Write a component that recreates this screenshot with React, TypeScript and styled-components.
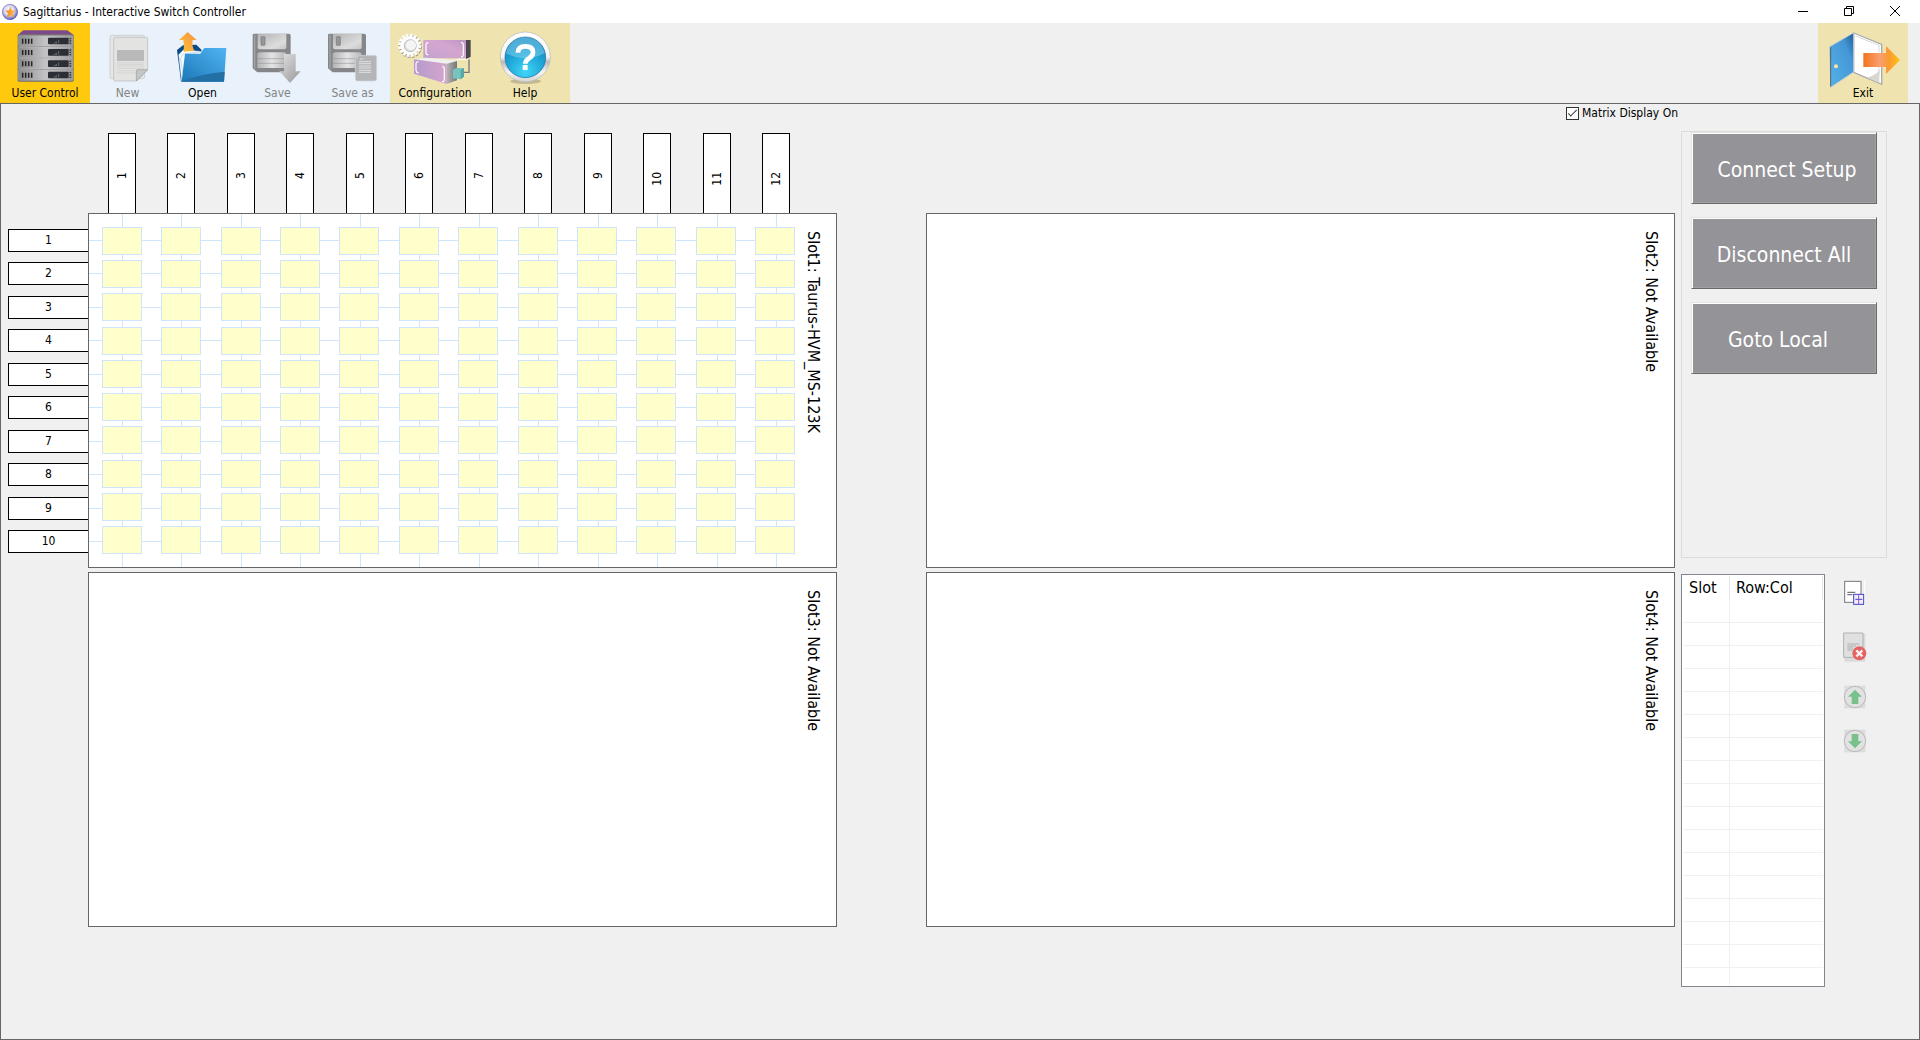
import React, { useState } from "react";
import styled, { createGlobalStyle, css } from "styled-components";

const GlobalStyle = createGlobalStyle`
  *, *::before, *::after { box-sizing: border-box; }
  body {
    margin: 0;
    background: #f0f0f0;
    color: #000;
    font-family: Tahoma, "DejaVu Sans Condensed", "Noto Sans", sans-serif;
    font-size: 12px;
    line-height: 16px;
  }
  button, input { font: inherit; color: inherit; }
`;

/* ---------- window frame ---------- */

const Window = styled.div`
  display: flex;
  flex-direction: column;
  min-height: 100vh;
`;

const TitleBar = styled.header`
  display: flex;
  align-items: center;
  gap: 5px;
  height: 23px;
  padding: 0 2px;
  background: #fff;
`;

const Title = styled.h1`
  flex: 1;
  margin: 0;
  font-size: 12px;
  font-weight: 400;
`;

const WindowButtons = styled.div`
  display: flex;
`;

const WindowButton = styled.button`
  display: grid;
  place-items: center;
  width: 46px;
  height: 23px;
  padding: 0 0 2px;
  border: 0;
  background: none;
`;

/* ---------- toolbar ---------- */

const Toolbar = styled.nav`
  display: flex;
  padding-right: 12px;
`;

const ToolGroup = styled.div<{ $tone: string; $end?: boolean }>`
  display: flex;
  background: ${(p) => p.$tone};
  ${(p) => p.$end && css`margin-left: auto;`}
`;

const ToolButton = styled.button<{ $narrow?: boolean }>`
  display: flex;
  flex-direction: column;
  align-items: center;
  gap: 1px;
  width: ${(p) => (p.$narrow ? 75 : 90)}px;
  padding: 7px 0 2px;
  border: 0;
  background: none;
  white-space: nowrap;
  line-height: 16px;

  &:disabled { color: #838383; }
  svg { display: block; overflow: visible; }
`;

/* ---------- work area ---------- */

const Main = styled.main`
  flex: 1;
  display: flex;
  gap: 6px;
  padding: 0 32px 0 7px;
  border: 1px solid #666;
`;

const Matrices = styled.section`
  flex: 1;
  min-width: 0;
`;

const DisplayToggle = styled.label`
  display: flex;
  justify-content: flex-end;
  align-items: center;
  gap: 3px;
  height: 18px;
  margin: 0 -3px 11px 0;
`;

const CheckBox = styled.input`
  appearance: none;
  width: 13px;
  height: 13px;
  margin: 0;
  border: 1px solid #333;
  background: #fff;
  display: grid;
  place-items: center;

  &:checked::after {
    content: "";
    width: 9px;
    height: 4px;
    margin-bottom: 3px;
    border: solid #333;
    border-width: 0 0 1px 1px;
    transform: rotate(-45deg);
  }
`;

const SlotGrid = styled.div`
  display: grid;
  grid-template-columns: 80px 1fr 89px 1fr;
  grid-template-rows: 80px 355px 355px;
`;

const ColumnPins = styled.div`
  grid-area: 1 / 2;
  display: flex;
  justify-content: space-between;
  padding: 0 47px 0 20px;
`;

const ColumnPin = styled.div`
  display: flex;
  flex-direction: column;
  align-items: center;
  width: 28px;
  padding-top: 38px;
  border: 1px solid #000;
  border-bottom: 0;
  background: #fff;

  span {
    writing-mode: vertical-rl;
    transform: rotate(180deg);
  }
`;

const RowPins = styled.div`
  grid-area: 2 / 1;
  display: flex;
  flex-direction: column;
  justify-content: space-between;
  padding: 16px 0 15px;
`;

const RowPin = styled.div`
  height: 23px;
  border: 1px solid #000;
  border-right: 0;
  background: #fff;
  line-height: 20px;
  text-align: center;
`;

const Slot = styled.article<{ $row: number; $col: number; $joined?: boolean }>`
  grid-area: ${(p) => p.$row} / ${(p) => p.$col};
  display: flex;
  border: 1px solid #666;
  background: #fff;
  margin-top: ${(p) => (p.$joined ? 4 : 0)}px;
  margin-bottom: ${(p) => (p.$joined ? -4 : 0)}px;
`;

const SlotName = styled.h2`
  width: 41px;
  margin: 0 0 0 auto;
  padding: 17px 9px 0 0;
  writing-mode: vertical-rl;
  font-size: 16px;
  font-weight: 400;
  line-height: 28px;
`;

const Board = styled.div`
  flex: 1;
  display: grid;

  > * { grid-area: 1 / 1; }
`;

const ColumnWires = styled.div`
  display: flex;
  justify-content: space-between;
  padding: 0 18px 0 33px;

  i { width: 1px; background: #cfe5fb; }
`;

const RowWires = styled.div`
  display: flex;
  flex-direction: column;
  justify-content: space-between;
  padding: 26px 20px 25px 0;

  i { height: 1px; background: #cfe5fb; }
`;

const Relays = styled.div`
  z-index: 1;
  display: flex;
  flex-direction: column;
  justify-content: space-between;
  padding: 13px 0 13px 13px;
`;

const RelayRow = styled.div`
  display: flex;
  justify-content: space-between;
`;

const Relay = styled.button`
  width: 40px;
  height: 28px;
  padding: 0;
  border: 1px solid #cfe5fb;
  background: #ffffcc;
`;

/* ---------- side panel ---------- */

const Side = styled.aside`
  flex: 0 0 206px;
  padding-top: 27px;
`;

const Commands = styled.div`
  display: flex;
  flex-direction: column;
  gap: 13px;
  min-height: 427px;
  padding: 0 9px;
  border: 1px solid #dcdcdc;
`;

const Command = styled.button`
  height: 72px;
  padding: 3px 0 0;
  border: 1px solid;
  border-color: #e3e3e3 #696969 #696969 #e3e3e3;
  box-shadow: inset 1px 1px #fff, inset -1px -1px #a0a0a0;
  background: #949398;
  color: #fff;
  font-size: 21px;
  white-space: pre;
`;

const Sequence = styled.div`
  display: flex;
  gap: 18px;
  margin-top: 16px;
`;

const TableFrame = styled.div`
  flex: 1;
  padding: 1px;
  border: 1px solid #82878f;
  background: #fff;
`;

const Table = styled.table`
  width: 100%;
  border-collapse: separate;
  border-spacing: 0;
  table-layout: fixed;

  th {
    height: 24px;
    padding: 0 6px;
    border-right: 1px solid #e5e5e5;
    font-size: 16px;
    font-weight: 400;
    text-align: left;
  }
  th:first-child { width: 47px; }
  td {
    height: 23px;
    padding: 0;
    border-bottom: 1px solid #f0f0f0;
  }
  td:first-child { border-right: 1px solid #f0f0f0; }
  tr:last-child td { height: 17px; border-bottom: 0; }
`;

const SequenceTools = styled.div`
  display: flex;
  flex-direction: column;
  gap: 20px;
  width: 44px;
  padding-top: 3px;
`;

const SequenceButton = styled.button<{ $height: number }>`
  display: flex;
  align-items: center;
  height: ${(p) => p.$height}px;
  width: 26px;
  padding: 0;
  border: 0;
  background: none;
`;

/* ---------- icons ---------- */

const AppIcon = () => (
  <svg width="16" height="16" viewBox="0 0 48 48">
    <defs>
      <radialGradient id="app" cx="0.45" cy="0.4" r="0.62">
        <stop offset="0" stopColor="#fff" />
        <stop offset="0.5" stopColor="#dedcf4" />
        <stop offset="1" stopColor="#5450b4" />
      </radialGradient>
      <linearGradient id="star" x1="0" x2="1">
        <stop offset="0" stopColor="#f4861c" />
        <stop offset="1" stopColor="#fcc04a" />
      </linearGradient>
    </defs>
    <circle cx="24" cy="24" r="23" fill="url(#app)" stroke="#5652a8" strokeWidth="1.5" />
    <path d="M25 7l4 12 12 1-9 8 4 13-11-7-11 8 4-14-8-8 11-1z" fill="url(#star)" />
  </svg>
);

const RackIcon = () => (
  <svg width="90" height="54" viewBox="0 90 270 162">
    <defs>
      <linearGradient id="rack" x1="0" x2="1">
        <stop offset="0" stopColor="#8b8b8e" />
        <stop offset="0.5" stopColor="#c4c4c6" />
        <stop offset="1" stopColor="#98989b" />
      </linearGradient>
    </defs>
    <path d="M70 91h132l18 13H54z" fill="#7d4a8d" />
    <rect x="53" y="103" width="168" height="142" rx="4" fill="#6c6c70" />
    {[0, 1, 2, 3].map((n) => (
      <g key={n} transform={`translate(0 ${n * 34})`}>
        <rect x="56" y="107" width="162" height="32" rx="2" fill="url(#rack)" stroke="#d4d4d6" strokeWidth="1" />
        <path d="M68 116v15M77 116v15M86 116v15M95 116v15" stroke="#242428" strokeWidth="4.5" />
        <rect x="144" y="113" width="62" height="20" rx="3" fill="#2b2e35" />
        <path d="M161 130l8-3v3M169 130v-6M176 130v-11" stroke="#6f737c" strokeWidth="2.5" fill="none" />
        <path d="M211 114v4M211 121v4M211 128v4" stroke="#333" strokeWidth="5" />
      </g>
    ))}
  </svg>
);

const NewIcon = () => (
  <svg width="75" height="54" viewBox="270 90 225 162">
    <rect x="330" y="106" width="104" height="130" rx="6" fill="#e6e6e6" stroke="#c2c2c2" strokeWidth="2" />
    <path d="M346 112h92q5 0 5 5v92l-33 34h-64q-5 0-5-5V117q0-5 5-5z" fill="#e3e3e2" stroke="#b4b6b6" strokeWidth="2" />
    <rect x="351" y="150" width="81" height="33" fill="#b9b9b9" />
    <path d="M351 188h81M351 193h81M351 198h81M351 205h81M351 212h62M351 219h58" stroke="#cfcfcf" strokeWidth="2" />
    <path d="M443 209h-30q-4 0-4 4v30z" fill="#c5c7c6" stroke="#989c9a" strokeWidth="2" />
  </svg>
);

const OpenIcon = () => (
  <svg width="75" height="54" viewBox="495 90 225 162">
    <defs>
      <linearGradient id="folder" x1="0" y1="1" x2="1" y2="0">
        <stop offset="0" stopColor="#1d78b8" />
        <stop offset="1" stopColor="#50b4f2" />
      </linearGradient>
      <linearGradient id="up" x1="0" y1="1" x2="1" y2="0">
        <stop offset="0" stopColor="#ffc43a" />
        <stop offset="1" stopColor="#f79040" />
      </linearGradient>
    </defs>
    <path d="M531 150l18-14 40-2 16 16-50 90-12 4z" fill="#0d4a86" />
    <path d="M536 164l14-14 50 4-46 88h-9z" fill="#fff" stroke="#b8d4ea" strokeWidth="1.5" />
    <path d="M541 176l8-14 60-8-56 88z" fill="#f4f9fd" stroke="#8cb8da" strokeWidth="1.5" />
    <path d="M563 96l27 24h-12q-3 18 5 32l-32 3q2-20-1-35h-13z" fill="url(#up)" />
    <path d="M545 245l10-84h46l12-17h66l-7 101z" fill="url(#folder)" />
    <path d="M541 245q60-24 133-30l-2 30z" fill="#226fa6" />
  </svg>
);

const DiskShape = () => (
  <>
    <path d="M4 0h104q6 0 6 6v104q0 6-6 6H14L0 104V4q0-4 4-4z" fill="#85868a" />
    <path d="M4 3h4v102H4z" fill="#a2a3a6" />
    <path d="M15 1h86v40q0 6-6 6H21q-6 0-6-6z" fill="url(#metal)" />
    <rect x="25" y="9" width="12" height="26" rx="2" fill="#96979a" stroke="#76777a" strokeWidth="2" />
    <path d="M22 56h71q8 0 8 8v39H14V64q0-8 8-8z" fill="url(#stripes)" />
    <path d="M14 75h87M14 89h87" stroke="#909195" strokeWidth="3" opacity=".55" />
  </>
);

const SaveIcon = () => (
  <svg width="75" height="54" viewBox="720 90 225 162">
    <defs>
      <linearGradient id="metal" x1="0" y1="0" x2="1" y2="1">
        <stop offset="0" stopColor="#b4b4b5" />
        <stop offset="0.7" stopColor="#dddddd" />
        <stop offset="1" stopColor="#c4c4c5" />
      </linearGradient>
      <linearGradient id="stripes" x1="0" x2="1">
        <stop offset="0" stopColor="#b2b2b4" />
        <stop offset="0.5" stopColor="#e4e4e5" />
        <stop offset="1" stopColor="#b8b8ba" />
      </linearGradient>
      <linearGradient id="down" x1="0" y1="0" x2="1" y2="1">
        <stop offset="0" stopColor="#e2e2e2" />
        <stop offset="1" stopColor="#979797" />
      </linearGradient>
    </defs>
    <g transform="translate(758 101)"><DiskShape /></g>
    <path d="M852 162h35v52h15l-32 35-32-35h14z" fill="url(#down)" />
  </svg>
);

const SaveAsIcon = () => (
  <svg width="75" height="54" viewBox="75 90 225 162">
    <g transform="translate(114 101)"><DiskShape /></g>
    <path d="M207 166h48q5 0 5 5v66q0 6-6 6h-52q-6 0-6-6v-60z" fill="#b4b5b6" stroke="#d6d7d8" strokeWidth="2" />
    <path d="M207 185h36M207 191h36M207 198h36M207 204h36M207 211h36M207 217h36" stroke="#dfe0e1" strokeWidth="3" />
    <path d="M210 177h10" stroke="#dfe0e1" strokeWidth="3" />
  </svg>
);

const ConfigIcon = () => (
  <svg width="90" height="54" viewBox="300 90 270 162">
    <defs>
      <linearGradient id="unitTop" x1="0" y1="1" x2="1" y2="0">
        <stop offset="0" stopColor="#c3a2cf" />
        <stop offset="0.6" stopColor="#d4a6cf" />
        <stop offset="1" stopColor="#bd95c4" />
      </linearGradient>
      <linearGradient id="unitFront" x1="0" x2="1">
        <stop offset="0" stopColor="#b69bcb" />
        <stop offset="1" stopColor="#d3a5cd" />
      </linearGradient>
      <linearGradient id="unitSide" x1="0" x2="1">
        <stop offset="0" stopColor="#b4b4b4" />
        <stop offset="1" stopColor="#77777a" />
      </linearGradient>
    </defs>
    <path d="M528 120h14v50l-14 8z" fill="#48484b" />
    <path d="M400 120h128v55H400z" fill="url(#unitTop)" />
    <path d="M415 128q-6-1-7 6v24q1 7 7 6M513 128q6-1 7 6v30q-1 8-7 6" fill="none" stroke="#fff" strokeWidth="3.5" />
    <path d="M372 178l34-5 96 8v4l-32 7z" fill="#f0f0f0" />
    <path d="M372 178l98 13v61l-98-31z" fill="url(#unitFront)" />
    <path d="M470 191l31-8v58l-31 11z" fill="url(#unitSide)" />
    <path d="M386 186q-7-3-8 5v20q1 7 8 8M457 200q6 0 6 7v32q-1 8-7 5" fill="none" stroke="#fff" strokeWidth="3.5" />
    <path d="M502 178h36" stroke="#fff" strokeWidth="3" />
    <path d="M537 178v39h-16" fill="none" stroke="#77777b" strokeWidth="4" />
    <path d="M489 210l10-6h23v26l-10 8-23-3z" fill="#74c4bf" />
    <path d="M512 238v-27l10-7v26z" fill="#58a7a3" />
    <g transform="translate(359 136)">
      <circle r="29" fill="none" stroke="#a39c80" strokeWidth="12" strokeDasharray="7.4 3.99" transform="translate(2 3)" />
      <circle r="29" fill="none" stroke="#fff" strokeWidth="12" strokeDasharray="7.4 3.99" />
      <circle r="28" fill="#fcfcfc" />
      <circle cx="2" cy="1" r="18" fill="#dcdcdc" stroke="#aaa9a4" strokeWidth="2" />
      <circle cx="4" cy="0" r="15" fill="#f6f5f5" />
    </g>
  </svg>
);

const HelpIcon = () => (
  <svg width="90" height="54" viewBox="570 90 270 162">
    <defs>
      <linearGradient id="ring" x1="0" y1="0" x2="0" y2="1">
        <stop offset="0" stopColor="#ffffff" />
        <stop offset="0.5" stopColor="#f6f6f6" />
        <stop offset="0.6" stopColor="#b9b9b9" />
        <stop offset="0.8" stopColor="#f5f5f5" />
        <stop offset="1" stopColor="#d2d2d2" />
      </linearGradient>
      <radialGradient id="blue" cx="0.5" cy="0.85" r="0.8">
        <stop offset="0" stopColor="#3fd6f8" />
        <stop offset="0.6" stopColor="#1da3d6" />
        <stop offset="1" stopColor="#1583bd" />
      </radialGradient>
    </defs>
    <ellipse cx="707" cy="244" rx="46" ry="8" fill="#9d9678" opacity=".55" />
    <circle cx="706" cy="171" r="75" fill="url(#ring)" stroke="#b5b5b0" strokeWidth="2" />
    <circle cx="706" cy="172" r="61" fill="url(#blue)" stroke="#156d9a" strokeWidth="2" />
    <path d="M648 160a59 59 0 0 1 116 0q-58 30-116 0z" fill="#8ad4f0" opacity=".5" />
    <path d="M684 158q0-19 22-19 23 0 23 18 0 11-12 18-11 6-11 16" fill="none" stroke="#fff" strokeWidth="14" />
    <rect x="698" y="195" width="15" height="15" rx="2" fill="#fff" />
  </svg>
);

const ExitIcon = () => (
  <svg width="90" height="54" viewBox="234 90 270 162">
    <defs>
      <linearGradient id="door" x1="0" y1="1" x2="1" y2="0">
        <stop offset="0" stopColor="#54b2e8" />
        <stop offset="0.7" stopColor="#4597d6" />
        <stop offset="1" stopColor="#1c5f98" />
      </linearGradient>
      <linearGradient id="out" x1="0" x2="1">
        <stop offset="0" stopColor="#f4741f" />
        <stop offset="0.45" stopColor="#f8a070" />
        <stop offset="0.7" stopColor="#fb9a30" />
        <stop offset="1" stopColor="#ffc514" />
      </linearGradient>
    </defs>
    <path d="M341 99l84 34v120l-84-36z" fill="#fff" stroke="#a9a9ac" strokeWidth="4" />
    <path d="M347 108l70 28v92" fill="none" stroke="#b4b4b8" strokeWidth="2" strokeDasharray="5 2" />
    <path d="M382 233q30-8 36-26v42z" fill="#d9d6cf" />
    <path d="M269 140l72-42v118l-69 46z" fill="url(#door)" stroke="#c3cdd4" strokeWidth="3" />
    <path d="M272 142v118" stroke="#54626c" strokeWidth="3" />
    <circle cx="288" cy="199" r="6" fill="#ffe3a3" />
    <path d="M370 159h68v-21l42 42-42 42v-21h-68z" fill="url(#out)" />
  </svg>
);

const AddStepIcon = () => (
  <svg width="24" height="26" viewBox="548 120 72 78">
    <path d="M613 120v78" stroke="#fff" strokeWidth="3" />
    <rect x="553" y="124" width="49" height="63" fill="#fff" stroke="#77777b" strokeWidth="3" />
    <path d="M561 157h24M561 164h15" stroke="#77777b" strokeWidth="4" />
    <rect x="580" y="163" width="30" height="30" fill="#eef" stroke="#4343c4" strokeWidth="3" />
    <path d="M585 178h21" stroke="#4343c4" strokeWidth="3" />
    <path d="M595 164v28" stroke="#a24cc8" strokeWidth="3" />
  </svg>
);

const RemoveStepIcon = () => (
  <svg width="24" height="30" viewBox="548 280 72 90">
    <path d="M552 285h63v84h-63z" fill="#dadada" />
    <path d="M550 283h58v73h-58z" fill="#e0e0e0" stroke="#b0b0b0" strokeWidth="3" />
    <path d="M561 316h36M561 322h26M561 328h18M561 334h16" stroke="#a3a3a3" strokeWidth="2.5" />
    <circle cx="597" cy="344" r="21" fill="#e26464" />
    <path d="M588 335l18 18M606 335l-18 18" stroke="#fbeeee" strokeWidth="7" />
  </svg>
);

const MoveIcon = ({ down }: { down?: boolean }) => (
  <svg width="24" height="24" viewBox="0 0 72 72">
    <rect x="4" y="2" width="63" height="68" fill="#dcdcdc" />
    <circle cx="36" cy="36" r="32" fill="#e2e2e2" stroke="#a2a2a2" strokeWidth="2" />
    <path
      d="M36 14l21 21H46v22H26V35H15z"
      fill="#79c18c"
      transform={down ? "rotate(180 36 36)" : undefined}
    />
  </svg>
);

/* ---------- app ---------- */

const columns = Array.from({ length: 12 }, (_, i) => i + 1);
const rows = Array.from({ length: 10 }, (_, i) => i + 1);
const steps = Array.from({ length: 17 }, (_, i) => i);

export default function App() {
  const [matrixOn, setMatrixOn] = useState(true);

  return (
    <Window>
      <GlobalStyle />
      <TitleBar>
        <AppIcon />
        <Title>Sagittarius - Interactive Switch Controller</Title>
        <WindowButtons>
          <WindowButton aria-label="Minimize">
            <svg width="10" height="10" stroke="#000" fill="none"><path d="M0 5.5h10" /></svg>
          </WindowButton>
          <WindowButton aria-label="Restore">
            <svg width="10" height="10" stroke="#000" fill="none">
              <path d="M.5 2.5h7v7h-7zM2.5 2V.5h7v7H8" />
            </svg>
          </WindowButton>
          <WindowButton aria-label="Close">
            <svg width="10" height="10" stroke="#000" fill="none"><path d="M0 0l10 10M10 0L0 10" /></svg>
          </WindowButton>
        </WindowButtons>
      </TitleBar>

      <Toolbar>
        <ToolGroup $tone="#ffc90e">
          <ToolButton><RackIcon />User Control</ToolButton>
        </ToolGroup>
        <ToolGroup $tone="#e9f2fb">
          <ToolButton $narrow disabled><NewIcon />New</ToolButton>
          <ToolButton $narrow><OpenIcon />Open</ToolButton>
          <ToolButton $narrow disabled><SaveIcon />Save</ToolButton>
          <ToolButton $narrow disabled><SaveAsIcon />Save as</ToolButton>
        </ToolGroup>
        <ToolGroup $tone="#efe4b0">
          <ToolButton><ConfigIcon />Configuration</ToolButton>
          <ToolButton><HelpIcon />Help</ToolButton>
        </ToolGroup>
        <ToolGroup $tone="#efe4b0" $end>
          <ToolButton><ExitIcon />Exit</ToolButton>
        </ToolGroup>
      </Toolbar>

      <Main>
        <Matrices>
          <DisplayToggle>
            <CheckBox
              type="checkbox"
              checked={matrixOn}
              onChange={(e) => setMatrixOn(e.target.checked)}
            />
            Matrix Display On
          </DisplayToggle>
          <SlotGrid>
            <ColumnPins>
              {columns.map((c) => <ColumnPin key={c}><span>{c}</span></ColumnPin>)}
            </ColumnPins>
            <RowPins>
              {rows.map((r) => <RowPin key={r}>{r}</RowPin>)}
            </RowPins>
            <Slot $row={2} $col={2}>
              {matrixOn && (
                <Board>
                  <ColumnWires>{columns.map((c) => <i key={c} />)}</ColumnWires>
                  <RowWires>{rows.map((r) => <i key={r} />)}</RowWires>
                  <Relays>
                    {rows.map((r) => (
                      <RelayRow key={r}>
                        {columns.map((c) => <Relay key={c} aria-label={`Row ${r} column ${c}`} />)}
                      </RelayRow>
                    ))}
                  </Relays>
                </Board>
              )}
              <SlotName>Slot1: Taurus-HVM_MS-123K</SlotName>
            </Slot>
            <Slot $row={2} $col={4}><SlotName>Slot2: Not Available</SlotName></Slot>
            <Slot $row={3} $col={2} $joined><SlotName>Slot3: Not Available</SlotName></Slot>
            <Slot $row={3} $col={4} $joined><SlotName>Slot4: Not Available</SlotName></Slot>
          </SlotGrid>
        </Matrices>

        <Side>
          <Commands>
            <Command>{" Connect Setup"}</Command>
            <Command>Disconnect All</Command>
            <Command>{"Goto Local  "}</Command>
          </Commands>
          <Sequence>
            <TableFrame>
              <Table>
                <thead>
                  <tr><th>Slot</th><th>Row:Col</th></tr>
                </thead>
                <tbody>
                  {steps.map((s) => <tr key={s}><td /><td /></tr>)}
                </tbody>
              </Table>
            </TableFrame>
            <SequenceTools>
              <SequenceButton $height={32} aria-label="Add step"><AddStepIcon /></SequenceButton>
              <SequenceButton $height={36} aria-label="Remove step"><RemoveStepIcon /></SequenceButton>
              <SequenceButton $height={24} aria-label="Move up"><MoveIcon /></SequenceButton>
              <SequenceButton $height={24} aria-label="Move down"><MoveIcon down /></SequenceButton>
            </SequenceTools>
          </Sequence>
        </Side>
      </Main>
    </Window>
  );
}
